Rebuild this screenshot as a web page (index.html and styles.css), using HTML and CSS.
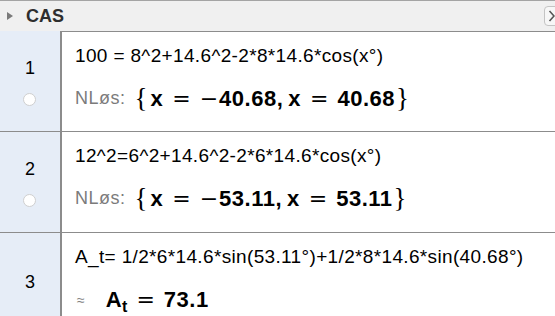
FILE: index.html
```html
<!DOCTYPE html>
<html lang="nb">
<head>
  <meta charset="UTF-8">
  <meta name="viewport" content="width=device-width, initial-scale=1.0">
  <title>CAS</title>
  <link rel="stylesheet" href="styles.css">
</head>
<body>
  <div class="header">
    <span class="toggle"></span>
    <span class="title">CAS</span>
    <span class="close-btn">
      <svg width="8" height="12" viewBox="0 0 8 12"><path d="M1.5 1 L6 6 L1.5 11" fill="none" stroke="#555" stroke-width="1.6"/></svg>
    </span>
  </div>
  <div class="rows">
    <div class="row">
      <div class="num-col">
        <span class="num">1</span>
        <span class="radio"></span>
      </div>
      <div class="cell">
        <div class="input">100 = 8^2+14.6^2-2*8*14.6*cos(x°)</div>
        <div class="output">
          <span class="label">NLøs:</span>
          <span class="math">
            <span class="brace">{</span><b>x</b><span class="op">=</span><span class="minus">−</span><b>40.68,</b><b class="sp">x</b><span class="op">=</span><b>40.68</b><span class="brace">}</span>
          </span>
        </div>
      </div>
    </div>
    <div class="row">
      <div class="num-col">
        <span class="num">2</span>
        <span class="radio"></span>
      </div>
      <div class="cell">
        <div class="input">12^2=6^2+14.6^2-2*6*14.6*cos(x°)</div>
        <div class="output">
          <span class="label">NLøs:</span>
          <span class="math">
            <span class="brace">{</span><b>x</b><span class="op">=</span><span class="minus">−</span><b>53.11,</b><b class="sp">x</b><span class="op">=</span><b>53.11</b><span class="brace">}</span>
          </span>
        </div>
      </div>
    </div>
    <div class="row last">
      <div class="num-col">
        <span class="num">3</span>
      </div>
      <div class="cell">
        <div class="input">A_t= 1/2*6*14.6*sin(53.11°)+1/2*8*14.6*sin(40.68°)</div>
        <div class="output">
          <span class="approx">≈</span>
          <span class="math">
            <b>A</b><sub>t</sub><span class="op">=</span><b>73.1</b>
          </span>
        </div>
      </div>
    </div>
  </div>
</body>
</html>
```

FILE: styles.css
```css
body {
  margin: 0;
  font-family: "Liberation Sans", Arial, sans-serif;
  color: #000;
  background-color: #fff;
  overflow: hidden;
  height: 316px;
}
.header {
  display: flex;
  align-items: center;
  height: 30px;
  border-top: 1px solid #a4a4a4;
  background-color: #f0f0f0;
  overflow: hidden;
}
.toggle {
  width: 0;
  height: 0;
  margin-left: 7px;
  border-left: 6px solid #7a7a7a;
  border-top: 4.5px solid transparent;
  border-bottom: 4.5px solid transparent;
}
.title {
  margin-left: 13px;
  font-size: 18px;
  font-weight: bold;
  color: #2e2e2e;
}
.close-btn {
  display: flex;
  align-items: center;
  margin-left: auto;
  margin-right: -14px;
  width: 20px;
  height: 18px;
  border: 1px solid #c4c4c4;
  border-radius: 4px;
  background-color: #f7f7f7;
  padding-left: 3px;
}
.row {
  display: grid;
  grid-template-columns: 62px 1fr;
  height: 100px;
  border-bottom: 1px solid #8c8c8c;
}
.row.last {
  height: 84px;
  border-bottom: none;
}
.num-col {
  position: relative;
  background-color: #e6edf7;
  border-right: 2px solid #8c8c8c;
}
.num {
  position: absolute;
  left: 0;
  width: 60px;
  top: 27px;
  text-align: center;
  font-size: 18px;
}
.row.last .num {
  top: 39px;
}
.radio {
  position: absolute;
  left: 23px;
  top: 62px;
  width: 11px;
  height: 11px;
  border-radius: 50%;
  background-color: #fff;
  border: 1px solid #cfcfcf;
}
.cell {
  display: flex;
  flex-direction: column;
  padding-left: 13px;
  border-top: 1px solid #8c8c8c;
}
.row + .row .cell {
  border-top: none;
}
.input {
  margin-top: 13px;
  font-size: 19px;
  line-height: 22px;
  letter-spacing: 0.35px;
  white-space: nowrap;
}
.output {
  display: flex;
  align-items: center;
  margin-top: 18px;
  height: 26px;
}
.row.last .output {
  margin-top: 19px;
}
.label {
  font-size: 18px;
  color: #7b7b7b;
  letter-spacing: 0.5px;
  margin-right: 9px;
}
.approx {
  font-size: 14px;
  color: #808080;
  margin-left: 2px;
  margin-right: 21px;
}
.math {
  font-size: 22px;
  white-space: nowrap;
}
.math b {
  font-weight: bold;
  letter-spacing: 0.5px;
}
.brace {
  font-family: "Liberation Serif", serif;
  font-size: 27px;
  vertical-align: -1px;
}
.brace:first-child {
  margin-right: 3px;
}
.brace:last-child {
  margin-left: 1px;
}
.op {
  font-family: "DejaVu Sans", sans-serif;
  margin: 0 9px;
}
.minus {
  font-family: "DejaVu Sans", sans-serif;
  margin-right: 1px;
}
.sp {
  margin-left: 5px;
}
.math sub {
  font-size: 16px;
  font-weight: bold;
  vertical-align: -5px;
  line-height: 0;
}
```
